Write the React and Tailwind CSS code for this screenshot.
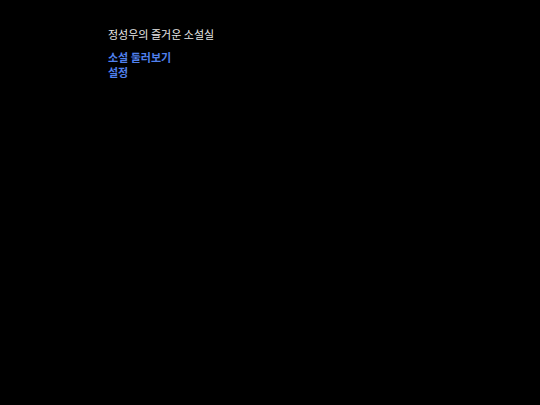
export default function App() {
  return (
    <div className="w-[540px] h-[405px] bg-black pl-[108px] pt-[27px]" style={{ fontFamily: '"Noto Sans CJK KR", "Noto Sans", sans-serif' }}>
      <div className="text-[11px] leading-[15px] text-[#e8e8e8]">정성우의 즐거운 소설실</div>
      <div className="mt-[8px] flex flex-col text-[11px] leading-[15px] font-bold text-[#5080ee]">
        <a>소설 둘러보기</a>
        <a>설정</a>
      </div>
    </div>
  );
}
